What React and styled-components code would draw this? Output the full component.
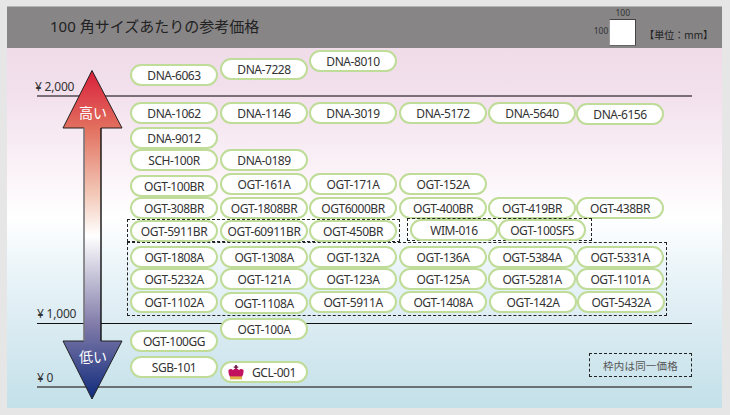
import styled, { createGlobalStyle } from "styled-components";

const GlobalStyle = createGlobalStyle`
  html, body {
    margin: 0;
    padding: 0;
    background: #e6e6e6;
  }
`;

const Page = styled.div`
  width: 730px;
  height: 415px;
  padding: 6px 8px 7px 7px;
  box-sizing: border-box;
  background: #e6e6e6;
  font-family: "Noto Sans", "Noto Sans CJK JP", sans-serif;
  overflow: hidden;
`;

const Frame = styled.div`
  display: flex;
  flex-direction: column;
  height: 402px;
  border-top: 1px solid #b5b5b5;
  box-sizing: border-box;
`;

const Header = styled.header`
  height: 41px;
  flex: none;
  background: #878586;
  display: flex;
  align-items: center;
  padding-left: 43px;
  padding-right: 9px;
`;

const Title = styled.h1`
  margin: 0;
  padding-bottom: 5px;
  font-size: 15px;
  font-weight: 400;
  color: #222;
  flex: 1;
`;

const SizeKey = styled.div`
  display: grid;
  grid-template-columns: auto 27px;
  grid-template-rows: 12px 27px;
  column-gap: 1px;
  align-self: flex-end;
  margin-bottom: 2px;
  font-size: 8.5px;
  color: #333;
  text-align: center;
`;

const SizeTop = styled.span`
  grid-column: 2;
  line-height: 12px;
`;

const SizeSide = styled.span`
  line-height: 24px;
`;

const SizeBox = styled.div`
  background: #fff;
  border: 1px solid #444;
  border-left-color: #999;
  border-bottom-color: #666;
  box-sizing: border-box;
`;

const Unit = styled.span`
  margin-left: 8px;
  margin-top: 14px;
  font-size: 10px;
  color: #222;
  white-space: nowrap;
`;

const Chart = styled.div`
  position: relative;
  flex: 1;
  padding: 2px 0 0 123px;
  background: linear-gradient(
    180deg,
    #f0dce9 0%,
    #f2e0ec 12%,
    #fbf2f8 34%,
    #ffffff 47%,
    #eaf4f9 62%,
    #d6e9f0 82%,
    #c3e0e9 100%
  );
`;

/* price axis and arrow sit on the chart, the pills are stacked above them */
const Level = styled.div`
  position: absolute;
  left: 30px;
  width: 655px;
  top: ${({ $y }) => $y}px;
  height: ${({ $weight }) => $weight}px;
  background: ${({ $color }) => $color};
`;

const LevelLabel = styled.span`
  position: absolute;
  left: ${({ $x }) => $x}px;
  top: ${({ $y }) => $y}px;
  font-size: 12px;
  letter-spacing: -0.2px;
  line-height: 14px;
  color: #333;
`;

const ArrowDrawing = styled.svg`
  position: absolute;
  left: 55px;
  top: 22px;
`;

const ArrowText = styled.span`
  position: absolute;
  left: 66px;
  top: ${({ $y }) => $y}px;
  width: 40px;
  text-align: center;
  font-size: 14px;
  line-height: 16px;
  color: #fff;
`;

const Legend = styled.div`
  position: absolute;
  left: 582px;
  top: 305px;
  width: 103px;
  height: 24px;
  box-sizing: border-box;
  border: 1px dashed #222;
  display: flex;
  align-items: center;
  justify-content: center;
  font-size: 10.5px;
  letter-spacing: 0.2px;
  color: #555;
`;

const PillArea = styled.div`
  position: relative;
  display: flex;
  flex-direction: column;
`;

const Row = styled.div`
  display: grid;
  grid-template-columns: ${({ $tracks }) => $tracks || "90px 89px 90px 89px 88px 88px"};
  align-items: start;
  margin-top: ${({ $gap }) => $gap || 0}px;
`;

const Pill = styled.div`
  width: 88px;
  height: 22px;
  box-sizing: border-box;
  display: flex;
  align-items: center;
  justify-content: ${({ $icon }) => ($icon ? "flex-start" : "center")};
  gap: 8px;
  padding-left: ${({ $icon }) => ($icon ? 6 : 0)}px;
  margin-top: ${({ $drop }) => $drop || 0}px;
  margin-left: ${({ $nudge }) => $nudge || 0}px;
  background: #fff;
  border: 2px solid #bfdc98;
  border-radius: 11px;
  font-size: 12px;
  letter-spacing: -0.45px;
  color: #333;
  white-space: nowrap;
`;

const GroupRow = styled.div`
  display: flex;
  align-items: flex-start;
  gap: 7px;
  height: 24px;
  margin: -1px 0 0 -3px;
`;

const SameGroup = styled.div`
  box-sizing: border-box;
  width: ${({ $w }) => $w}px;
  height: ${({ $h }) => $h}px;
  margin-top: ${({ $drop }) => $drop || 0}px;
  margin-left: ${({ $shift }) => $shift || 0}px;
  padding: ${({ $inset }) => $inset || 0}px 0 0 2px;
  border: 1px dashed #222;
`;

const BottomRow = styled.div`
  display: flex;
`;

const BottomColumn = styled.div`
  width: ${({ $w }) => $w}px;
  display: flex;
  flex-direction: column;
  gap: ${({ $gap }) => $gap}px;
  padding-top: ${({ $top }) => $top}px;
`;

const Crown = () => (
  <svg width="16" height="15" viewBox="0 0 16 15">
    <path d="M7.2 0h1.6v1.5h1.5v1.3H8.8v2H7.2v-2H5.7V1.5h1.5z" fill="#6b1238" />
    <path
      d="M0.4 5.2 C2 3.6 4 3.8 5 5.2 C6 3.9 7 3.6 8 3.9 C9 3.6 10 3.9 11 5.2 C12 3.8 14 3.6 15.6 5.2 C15.6 8 15 10 14 12 H2 C1 10 0.4 8 0.4 5.2 Z"
      fill="#c2125f"
    />
    <rect x="2" y="11.4" width="12" height="3" fill="#dfae45" />
  </svg>
);

const names = (list) =>
  list.map(([name, drop, nudge]) => (
    <Pill key={name} $drop={drop} $nudge={nudge}>
      {name}
    </Pill>
  ));

export default function App() {
  return (
    <>
      <GlobalStyle />
      <Page>
        <Frame>
          <Header>
            <Title>100 角サイズあたりの参考価格</Title>
            <SizeKey>
              <SizeTop>100</SizeTop>
              <SizeSide>100</SizeSide>
              <SizeBox />
            </SizeKey>
            <Unit>【単位：mm】</Unit>
          </Header>
          <Chart>
            <Level $y={47} $weight={2} $color="#7a6f76" />
            <Level $y={275} $weight={1} $color="#111" />
            <Level $y={338} $weight={2} $color="#6b7173" />
            <LevelLabel $x={28} $y={32}>¥ 2,000</LevelLabel>
            <LevelLabel $x={30} $y={259}>¥ 1,000</LevelLabel>
            <LevelLabel $x={30} $y={323}>¥ 0</LevelLabel>

            <ArrowDrawing width="66" height="332" viewBox="0 0 66 332">
              <defs>
                <linearGradient id="priceUp" x1="0" y1="0" x2="0" y2="1">
                  <stop offset="0" stopColor="#d81f3a" />
                  <stop offset="0.35" stopColor="#e2705f" />
                  <stop offset="0.75" stopColor="#f3c9b8" />
                  <stop offset="1" stopColor="#ffffff" />
                </linearGradient>
                <linearGradient id="priceDown" x1="0" y1="0" x2="0" y2="1">
                  <stop offset="0" stopColor="#ffffff" />
                  <stop offset="0.55" stopColor="#7f7aa8" />
                  <stop offset="1" stopColor="#0f2a7c" />
                </linearGradient>
              </defs>
              <path d="M30 0.5 L60 58 H39 V166 H22 V58 H1 Z" fill="url(#priceUp)" />
              <path d="M22 166 H39 V271 H60 L30 329 L1 271 H22 Z" fill="url(#priceDown)" />
              <path d="M22 58 H1 L30 0.5 L60 58 H39" fill="none" stroke="#222" strokeWidth="1" />
              <path d="M1 271 H22 M39 271 H60 L30 329 L1 271" fill="none" stroke="#222" strokeWidth="1" />
              <path d="M22 58 V271" fill="none" stroke="#77757a" strokeWidth="1.6" />
              <path d="M39 58 V271" fill="none" stroke="#111" strokeWidth="1.4" />
            </ArrowDrawing>
            <ArrowText $y={57}>高い</ArrowText>
            <ArrowText $y={301}>低い</ArrowText>

            <PillArea>
              <Row>
                {names([["DNA-6063", 14], ["DNA-7228", 8], ["DNA-8010"]])}
              </Row>
              <Row $gap={16}>
                {names([
                  ["DNA-1062"],
                  ["DNA-1146"],
                  ["DNA-3019"],
                  ["DNA-5172"],
                  ["DNA-5640"],
                  ["DNA-6156", 1],
                ])}
              </Row>
              <Row $gap={2}>{names([["DNA-9012"]])}</Row>
              <Row>{names([["SCH-100R"], ["DNA-0189"]])}</Row>
              <Row $gap={2}>
                {names([["OGT-100BR", 2], ["OGT-161A"], ["OGT-171A"], ["OGT-152A"]])}
              </Row>
              <Row>
                {names([
                  ["OGT-308BR"],
                  ["OGT-1808BR"],
                  ["OGT6000BR"],
                  ["OGT-400BR"],
                  ["OGT-419BR"],
                  ["OGT-438BR"],
                ])}
              </Row>
              <GroupRow>
                <SameGroup $w={273} $h={23} $drop={1}>
                  <Row $tracks="90px 89px 88px">
                    {names([["OGT-5911BR"], ["OGT-60911BR"], ["OGT-450BR"]])}
                  </Row>
                </SameGroup>
                <SameGroup $w={185} $h={23}>
                  <Row $tracks="88px 88px">
                    {names([["WIM-016"], ["OGT-100SFS"]])}
                  </Row>
                </SameGroup>
              </GroupRow>
              <SameGroup $w={540} $h={74} $inset={3} $shift={-3}>
                <Row>
                  {names([
                    ["OGT-1808A"],
                    ["OGT-1308A"],
                    ["OGT-132A"],
                    ["OGT-136A"],
                    ["OGT-5384A"],
                    ["OGT-5331A"],
                  ])}
                </Row>
                <Row>
                  {names([
                    ["OGT-5232A"],
                    ["OGT-121A"],
                    ["OGT-123A"],
                    ["OGT-125A"],
                    ["OGT-5281A"],
                    ["OGT-1101A"],
                  ])}
                </Row>
                <Row $gap={1}>
                  {names([
                    ["OGT-1102A"],
                    ["OGT-1108A", 1],
                    ["OGT-5911A"],
                    ["OGT-1408A"],
                    ["OGT-142A", 0, 1],
                    ["OGT-5432A", 0, 1],
                  ])}
                </Row>
              </SameGroup>
              <BottomRow>
                <BottomColumn $w={90} $top={14} $gap={4}>
                  {names([["OGT-100GG"], ["SGB-101"]])}
                </BottomColumn>
                <BottomColumn $w={89} $top={2} $gap={21}>
                  {names([["OGT-100A"]])}
                  <Pill $icon>
                    <Crown />
                    GCL-001
                  </Pill>
                </BottomColumn>
              </BottomRow>
            </PillArea>

            <Legend>枠内は同一価格</Legend>
          </Chart>
        </Frame>
      </Page>
    </>
  );
}
